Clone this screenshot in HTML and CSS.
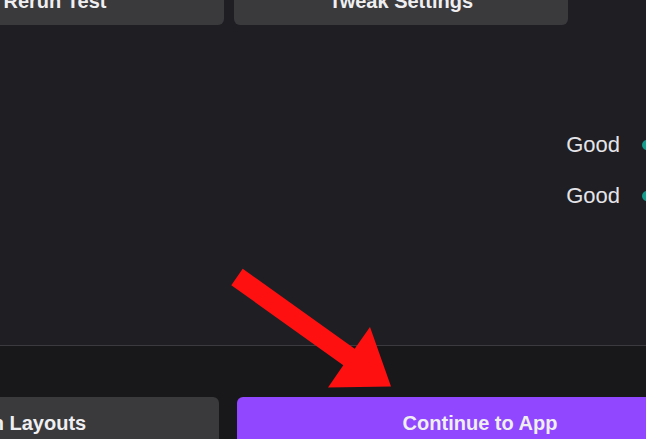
FILE: index.html
```html
<!DOCTYPE html>
<html lang="en">
<head>
<meta charset="utf-8">
<title>Bandwidth Test</title>
<link rel="stylesheet" href="styles.css">
</head>
<body>
<div class="page">
  <div class="top-row">
    <button class="btn btn-gray btn-rerun">Rerun Test</button>
    <button class="btn btn-gray btn-tweak">Tweak Settings</button>
  </div>
  <main class="main">
    <div class="status">
      <div class="status-row"><span class="status-text">Good</span><span class="dot"></span></div>
      <div class="status-row"><span class="status-text">Good</span><span class="dot"></span></div>
    </div>
  </main>
  <footer class="footer">
    <button class="btn btn-gray btn-layouts">Open Layouts</button>
    <button class="btn btn-purple btn-continue">Continue to App</button>
  </footer>
  <svg class="arrow" width="646" height="439" viewBox="0 0 646 439" aria-hidden="true">
    <polygon points="242.7,268.8 354.7,348.8 370,327 391,386.5 328,387.5 343.3,365.2 231.3,285.2" fill="#ff1010"/>
  </svg>
</div>
</body>
</html>
```

FILE: styles.css
```css
* { box-sizing: border-box; }
html, body { margin: 0; padding: 0; }
body {
  background: #1f1f23;
  font-family: "Liberation Sans", Arial, sans-serif;
  color: #efeff1;
}
.page {
  position: relative;
  width: 646px;
  height: 439px;
  overflow: hidden;
  background: #1f1f23;
  display: flex;
  flex-direction: column;
}
.btn {
  font-family: "Liberation Sans", Arial, sans-serif;
  font-weight: 700;
  font-size: 20px;
  color: #efeff1;
  border: none;
  border-radius: 6px;
  padding: 0;
  display: flex;
  align-items: center;
  justify-content: center;
  white-space: nowrap;
  flex: none;
}
.btn-gray { background: #3a3a3d; }
.btn-purple { background: #9147ff; }

.top-row {
  display: flex;
  gap: 10px;
  margin-top: -22px;
  margin-left: -114px;
  height: 47px;
  flex: none;
}
.btn-rerun { width: 338px; height: 47px; }
.btn-tweak { width: 334px; height: 47px; }

.main {
  height: 320px;
  flex: none;
  display: flex;
  justify-content: flex-end;
  padding-top: 105px;
}
.status {
  display: flex;
  flex-direction: column;
  gap: 21px;
  margin-right: -6px;
}
.status-row {
  height: 30px;
  display: flex;
  align-items: center;
  gap: 22px;
}
.status-text {
  font-size: 22px;
  color: #e4e4e8;
}
.dot {
  width: 10px;
  height: 10px;
  border-radius: 50%;
  background: #139b8c;
}

.footer {
  flex: 1;
  background: #18181b;
  border-top: 1px solid #3a3a3f;
  display: flex;
  gap: 18px;
  padding-top: 51px;
  margin-left: -180px;
}
.btn-layouts { width: 399px; height: 52px; border-radius: 6px 6px 0 0; }
.btn-continue { width: 486px; height: 52px; border-radius: 6px 6px 0 0; }

.arrow {
  position: absolute;
  left: 0;
  top: 0;
  pointer-events: none;
}
```
